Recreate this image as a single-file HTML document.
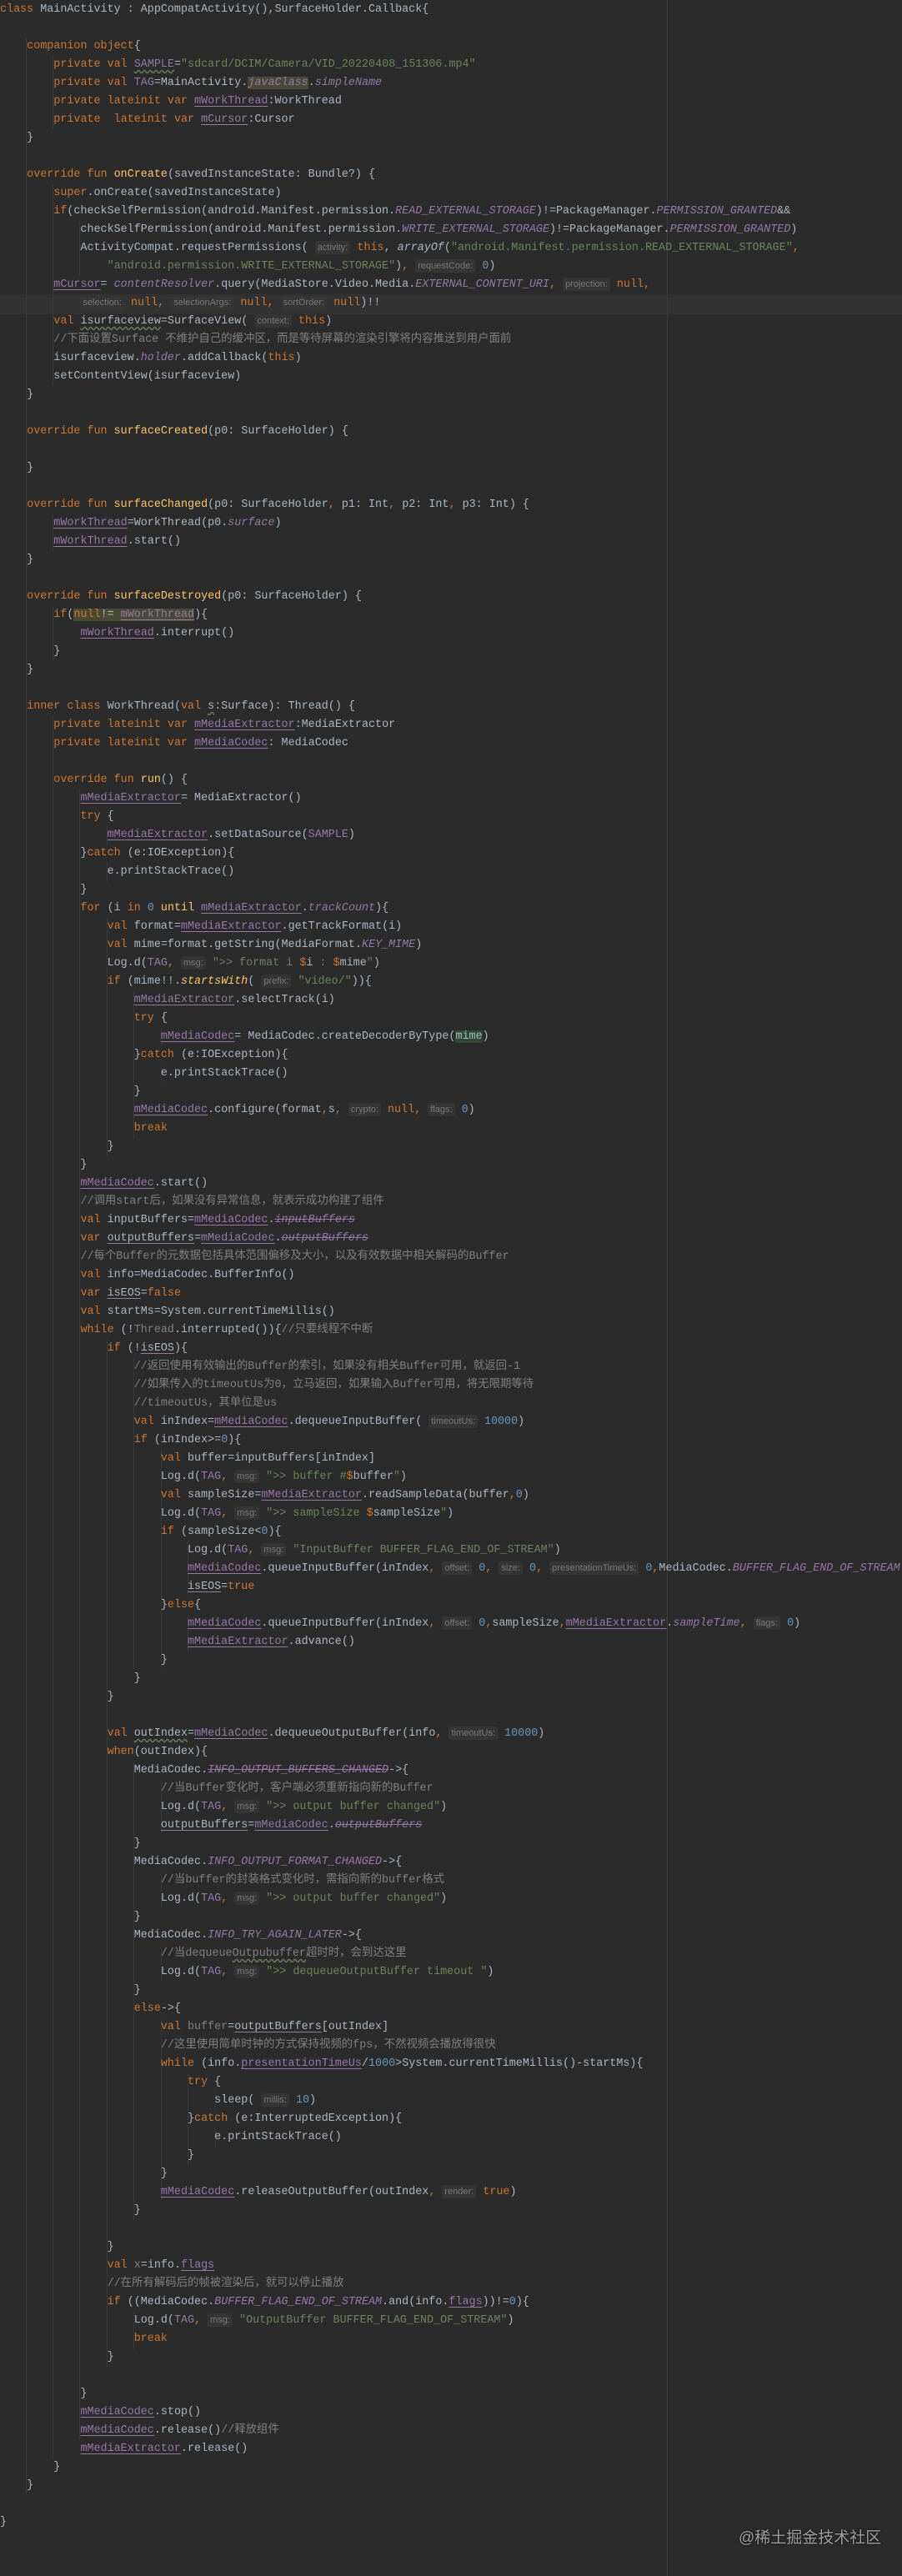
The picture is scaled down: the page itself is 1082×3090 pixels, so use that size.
<!DOCTYPE html>
<html><head><meta charset="utf-8">
<style>
html,body{margin:0;padding:0;background:#2b2b2b;}
body{width:1082px;height:3090px;position:relative;overflow:hidden;}
#code{position:absolute;left:0;top:1px;margin:0;font-family:"Liberation Mono","Noto Sans CJK SC",monospace;font-size:13.4px;line-height:22px;color:#a9b7c6;white-space:pre;}
.k{color:#cc7832}.f{color:#ffc66d}.s{color:#6a8759}.n{color:#6897bb}.c{color:#808080;line-height:12px}
.p{color:#9876aa}.i{font-style:italic}.u{text-decoration:underline;text-decoration-color:#9876aa;text-underline-offset:3px}
.w{text-decoration:underline wavy #6a8759;text-underline-offset:3px}
.st{text-decoration:line-through}
.h{font-family:"Liberation Sans",sans-serif;font-size:11px;line-height:12px;color:#7a7a7a;background:#353535;border-radius:3px;padding:2px 3px;}
.g{position:absolute;width:1px;background:#393939;}
.hl{position:absolute;left:0;width:1082px;height:24px;background:#323232;}
.y{background:#4a4a34}
.gr{background:#2e4a33}
</style></head><body>
<div class="hl" style="top:353px"></div>
<div style="position:absolute;left:800px;top:0;width:1px;height:3090px;background:#3a3a3a"></div>
<div class="g" style="left:31px;top:45px;height:2945px"></div>
<div class="g" style="left:63px;top:67px;height:88px"></div>
<div class="g" style="left:63px;top:221px;height:242px"></div>
<div class="g" style="left:63px;top:617px;height:44px"></div>
<div class="g" style="left:63px;top:727px;height:66px"></div>
<div class="g" style="left:63px;top:859px;height:2090px"></div>
<div class="g" style="left:95px;top:265px;height:66px"></div>
<div class="g" style="left:95px;top:947px;height:1980px"></div>
<div class="g" style="left:128px;top:991px;height:22px"></div>
<div class="g" style="left:128px;top:1035px;height:22px"></div>
<div class="g" style="left:128px;top:1101px;height:286px"></div>
<div class="g" style="left:128px;top:1607px;height:1232px"></div>
<div class="g" style="left:160px;top:1189px;height:176px"></div>
<div class="g" style="left:160px;top:1629px;height:374px"></div>
<div class="g" style="left:160px;top:2113px;height:550px"></div>
<div class="g" style="left:160px;top:2773px;height:44px"></div>
<div class="g" style="left:193px;top:1233px;height:22px"></div>
<div class="g" style="left:193px;top:1277px;height:22px"></div>
<div class="g" style="left:193px;top:1739px;height:264px"></div>
<div class="g" style="left:193px;top:2135px;height:66px"></div>
<div class="g" style="left:193px;top:2245px;height:44px"></div>
<div class="g" style="left:193px;top:2333px;height:44px"></div>
<div class="g" style="left:193px;top:2421px;height:220px"></div>
<div class="g" style="left:225px;top:1849px;height:66px"></div>
<div class="g" style="left:225px;top:1937px;height:44px"></div>
<div class="g" style="left:225px;top:2487px;height:110px"></div>
<div class="g" style="left:258px;top:2509px;height:22px"></div>
<div class="g" style="left:258px;top:2553px;height:22px"></div>
<pre id="code"><span class="k">class</span> MainActivity : AppCompatActivity(),SurfaceHolder.Callback{

    <span class="k">companion object</span>{
        <span class="k">private val</span> <span class="p w">SAMPLE</span>=<span class="s">"sdcard/DCIM/Camera/VID_20220408_151306.mp4"</span>
        <span class="k">private val</span> <span class="p">TAG</span>=MainActivity.<span class="p i y">javaClass</span>.<span class="p i">simpleName</span>
        <span class="k">private lateinit var</span> <span class="p u">mWorkThread</span>:WorkThread
        <span class="k">private  lateinit var</span> <span class="p u">mCursor</span>:Cursor
    }

    <span class="k">override fun</span> <span class="f">onCreate</span>(savedInstanceState: Bundle?) {
        <span class="k">super</span>.onCreate(savedInstanceState)
        <span class="k">if</span>(checkSelfPermission(android.Manifest.permission.<span class="p i">READ_EXTERNAL_STORAGE</span>)!=PackageManager.<span class="p i">PERMISSION_GRANTED</span>&amp;&amp;
            checkSelfPermission(android.Manifest.permission.<span class="p i">WRITE_EXTERNAL_STORAGE</span>)!=PackageManager.<span class="p i">PERMISSION_GRANTED</span>)
            ActivityCompat.requestPermissions( <span class="h">activity:</span> <span class="k">this</span>, <span class="i">arrayOf</span>(<span class="s">"android.Manifest.permission.READ_EXTERNAL_STORAGE"</span><span class="k">,</span>
                <span class="s">"android.permission.WRITE_EXTERNAL_STORAGE"</span>)<span class="k">,</span> <span class="h">requestCode:</span> <span class="n">0</span>)
        <span class="p u">mCursor</span>= <span class="p i">contentResolver</span>.query(MediaStore.Video.Media.<span class="p i">EXTERNAL_CONTENT_URI</span><span class="k">,</span> <span class="h">projection:</span> <span class="k">null,</span>
            <span class="h">selection:</span> <span class="k">null,</span> <span class="h">selectionArgs:</span> <span class="k">null,</span> <span class="h">sortOrder:</span> <span class="k">null</span>)!!
        <span class="k">val</span> <span class="w">isurfaceview</span>=SurfaceView( <span class="h">context:</span> <span class="k">this</span>)
        <span class="c">//下面设置Surface 不维护自己的缓冲区，而是等待屏幕的渲染引擎将内容推送到用户面前</span>
        isurfaceview.<span class="p i">holder</span>.addCallback(<span class="k">this</span>)
        setContentView(isurfaceview)
    }

    <span class="k">override fun</span> <span class="f">surfaceCreated</span>(p0: SurfaceHolder) {

    }

    <span class="k">override fun</span> <span class="f">surfaceChanged</span>(p0: SurfaceHolder<span class="k">,</span> p1: Int<span class="k">,</span> p2: Int<span class="k">,</span> p3: Int) {
        <span class="p u">mWorkThread</span>=WorkThread(p0.<span class="p i">surface</span>)
        <span class="p u">mWorkThread</span>.start()
    }

    <span class="k">override fun</span> <span class="f">surfaceDestroyed</span>(p0: SurfaceHolder) {
        <span class="k">if</span>(<span class="y"><span class="k">null</span>!= <span class="p u">mWorkThread</span></span>){
            <span class="p u">mWorkThread</span>.interrupt()
        }
    }

    <span class="k">inner class</span> WorkThread(<span class="k">val</span> <span class="w">s</span>:Surface): Thread() {
        <span class="k">private lateinit var</span> <span class="p u">mMediaExtractor</span>:MediaExtractor
        <span class="k">private lateinit var</span> <span class="p u">mMediaCodec</span>: MediaCodec

        <span class="k">override fun</span> <span class="f">run</span>() {
            <span class="p u">mMediaExtractor</span>= MediaExtractor()
            <span class="k">try</span> {
                <span class="p u">mMediaExtractor</span>.setDataSource(<span class="p">SAMPLE</span>)
            }<span class="k">catch</span> (e:IOException){
                e.printStackTrace()
            }
            <span class="k">for</span> (i <span class="k">in</span> <span class="n">0</span> <span class="f">until</span> <span class="p u">mMediaExtractor</span>.<span class="p i">trackCount</span>){
                <span class="k">val</span> format=<span class="p u">mMediaExtractor</span>.getTrackFormat(i)
                <span class="k">val</span> mime=format.getString(MediaFormat.<span class="p i">KEY_MIME</span>)
                Log.d(<span class="p">TAG</span><span class="k">,</span> <span class="h">msg:</span> <span class="s">"&gt;&gt; format i </span><span class="k">$</span>i<span class="s"> : </span><span class="k">$</span>mime<span class="s">"</span>)
                <span class="k">if</span> (mime!!.<span class="f i">startsWith</span>( <span class="h">prefix:</span> <span class="s">"video/"</span>)){
                    <span class="p u">mMediaExtractor</span>.selectTrack(i)
                    <span class="k">try</span> {
                        <span class="p u">mMediaCodec</span>= MediaCodec.createDecoderByType(<span class="gr">mime</span>)
                    }<span class="k">catch</span> (e:IOException){
                        e.printStackTrace()
                    }
                    <span class="p u">mMediaCodec</span>.configure(format<span class="k">,</span>s<span class="k">,</span> <span class="h">crypto:</span> <span class="k">null,</span> <span class="h">flags:</span> <span class="n">0</span>)
                    <span class="k">break</span>
                }
            }
            <span class="p u">mMediaCodec</span>.start()
            <span class="c">//调用start后，如果没有异常信息，就表示成功构建了组件</span>
            <span class="k">val</span> inputBuffers=<span class="p u">mMediaCodec</span>.<span class="p i st">inputBuffers</span>
            <span class="k">var</span> <span class="u">outputBuffers</span>=<span class="p u">mMediaCodec</span>.<span class="p i st">outputBuffers</span>
            <span class="c">//每个Buffer的元数据包括具体范围偏移及大小，以及有效数据中相关解码的Buffer</span>
            <span class="k">val</span> info=MediaCodec.BufferInfo()
            <span class="k">var</span> <span class="u">isEOS</span>=<span class="k">false</span>
            <span class="k">val</span> startMs=System.currentTimeMillis()
            <span class="k">while</span> (!<span class="c">Thread</span>.interrupted()){<span class="c">//只要线程不中断</span>
                <span class="k">if</span> (!<span class="u">isEOS</span>){
                    <span class="c">//返回使用有效输出的Buffer的索引，如果没有相关Buffer可用，就返回-1</span>
                    <span class="c">//如果传入的timeoutUs为0，立马返回，如果输入Buffer可用，将无限期等待</span>
                    <span class="c">//timeoutUs，其单位是us</span>
                    <span class="k">val</span> inIndex=<span class="p u">mMediaCodec</span>.dequeueInputBuffer( <span class="h">timeoutUs:</span> <span class="n">10000</span>)
                    <span class="k">if</span> (inIndex&gt;=<span class="n">0</span>){
                        <span class="k">val</span> buffer=inputBuffers[inIndex]
                        Log.d(<span class="p">TAG</span><span class="k">,</span> <span class="h">msg:</span> <span class="s">"&gt;&gt; buffer #</span><span class="k">$</span>buffer<span class="s">"</span>)
                        <span class="k">val</span> sampleSize=<span class="p u">mMediaExtractor</span>.readSampleData(buffer<span class="k">,</span><span class="n">0</span>)
                        Log.d(<span class="p">TAG</span><span class="k">,</span> <span class="h">msg:</span> <span class="s">"&gt;&gt; sampleSize </span><span class="k">$</span>sampleSize<span class="s">"</span>)
                        <span class="k">if</span> (sampleSize&lt;<span class="n">0</span>){
                            Log.d(<span class="p">TAG</span><span class="k">,</span> <span class="h">msg:</span> <span class="s">"InputBuffer BUFFER_FLAG_END_OF_STREAM"</span>)
                            <span class="p u">mMediaCodec</span>.queueInputBuffer(inIndex<span class="k">,</span> <span class="h">offset:</span> <span class="n">0</span><span class="k">,</span> <span class="h">size:</span> <span class="n">0</span><span class="k">,</span> <span class="h">presentationTimeUs:</span> <span class="n">0</span><span class="k">,</span>MediaCodec.<span class="p i">BUFFER_FLAG_END_OF_STREAM</span>)
                            <span class="u">isEOS</span>=<span class="k">true</span>
                        }<span class="k">else</span>{
                            <span class="p u">mMediaCodec</span>.queueInputBuffer(inIndex<span class="k">,</span> <span class="h">offset:</span> <span class="n">0</span><span class="k">,</span>sampleSize<span class="k">,</span><span class="p u">mMediaExtractor</span>.<span class="p i">sampleTime</span><span class="k">,</span> <span class="h">flags:</span> <span class="n">0</span>)
                            <span class="p u">mMediaExtractor</span>.advance()
                        }
                    }
                }

                <span class="k">val</span> <span class="w">outIndex</span>=<span class="p u">mMediaCodec</span>.dequeueOutputBuffer(info<span class="k">,</span> <span class="h">timeoutUs:</span> <span class="n">10000</span>)
                <span class="k">when</span>(outIndex){
                    MediaCodec.<span class="p i st">INFO_OUTPUT_BUFFERS_CHANGED</span>-&gt;{
                        <span class="c">//当Buffer变化时，客户端必须重新指向新的Buffer</span>
                        Log.d(<span class="p">TAG</span><span class="k">,</span> <span class="h">msg:</span> <span class="s">"&gt;&gt; output buffer changed"</span>)
                        <span class="u">outputBuffers</span>=<span class="p u">mMediaCodec</span>.<span class="p i st">outputBuffers</span>
                    }
                    MediaCodec.<span class="p i">INFO_OUTPUT_FORMAT_CHANGED</span>-&gt;{
                        <span class="c">//当buffer的封装格式变化时，需指向新的buffer格式</span>
                        Log.d(<span class="p">TAG</span><span class="k">,</span> <span class="h">msg:</span> <span class="s">"&gt;&gt; output buffer changed"</span>)
                    }
                    MediaCodec.<span class="p i">INFO_TRY_AGAIN_LATER</span>-&gt;{
                        <span class="c">//当dequeue<span class="w">Outpubuffer</span>超时时，会到达这里</span>
                        Log.d(<span class="p">TAG</span><span class="k">,</span> <span class="h">msg:</span> <span class="s">"&gt;&gt; dequeueOutputBuffer timeout "</span>)
                    }
                    <span class="k">else</span>-&gt;{
                        <span class="k">val</span> <span class="c">buffer</span>=<span class="u">outputBuffers</span>[outIndex]
                        <span class="c">//这里使用简单时钟的方式保持视频的fps，不然视频会播放得很快</span>
                        <span class="k">while</span> (info.<span class="p u">presentationTimeUs</span>/<span class="n">1000</span>&gt;System.currentTimeMillis()-startMs){
                            <span class="k">try</span> {
                                sleep( <span class="h">millis:</span> <span class="n">10</span>)
                            }<span class="k">catch</span> (e:InterruptedException){
                                e.printStackTrace()
                            }
                        }
                        <span class="p u">mMediaCodec</span>.releaseOutputBuffer(outIndex<span class="k">,</span> <span class="h">render:</span> <span class="k">true</span>)
                    }

                }
                <span class="k">val</span> <span class="c">x</span>=info.<span class="p u">flags</span>
                <span class="c">//在所有解码后的帧被渲染后，就可以停止播放</span>
                <span class="k">if</span> ((MediaCodec.<span class="p i">BUFFER_FLAG_END_OF_STREAM</span>.and(info.<span class="p u">flags</span>))!=<span class="n">0</span>){
                    Log.d(<span class="p">TAG</span><span class="k">,</span> <span class="h">msg:</span> <span class="s">"OutputBuffer BUFFER_FLAG_END_OF_STREAM"</span>)
                    <span class="k">break</span>
                }

            }
            <span class="p u">mMediaCodec</span>.stop()
            <span class="p u">mMediaCodec</span>.release()<span class="c">//释放组件</span>
            <span class="p u">mMediaExtractor</span>.release()
        }
    }

}</pre>
<div style="position:absolute;left:886px;top:3033px;font-family:'Liberation Sans','Noto Sans CJK SC',sans-serif;font-size:19px;line-height:24px;color:#a0a0a0;text-shadow:0 0 2px #000;">@稀土掘金技术社区</div>
</body></html>
